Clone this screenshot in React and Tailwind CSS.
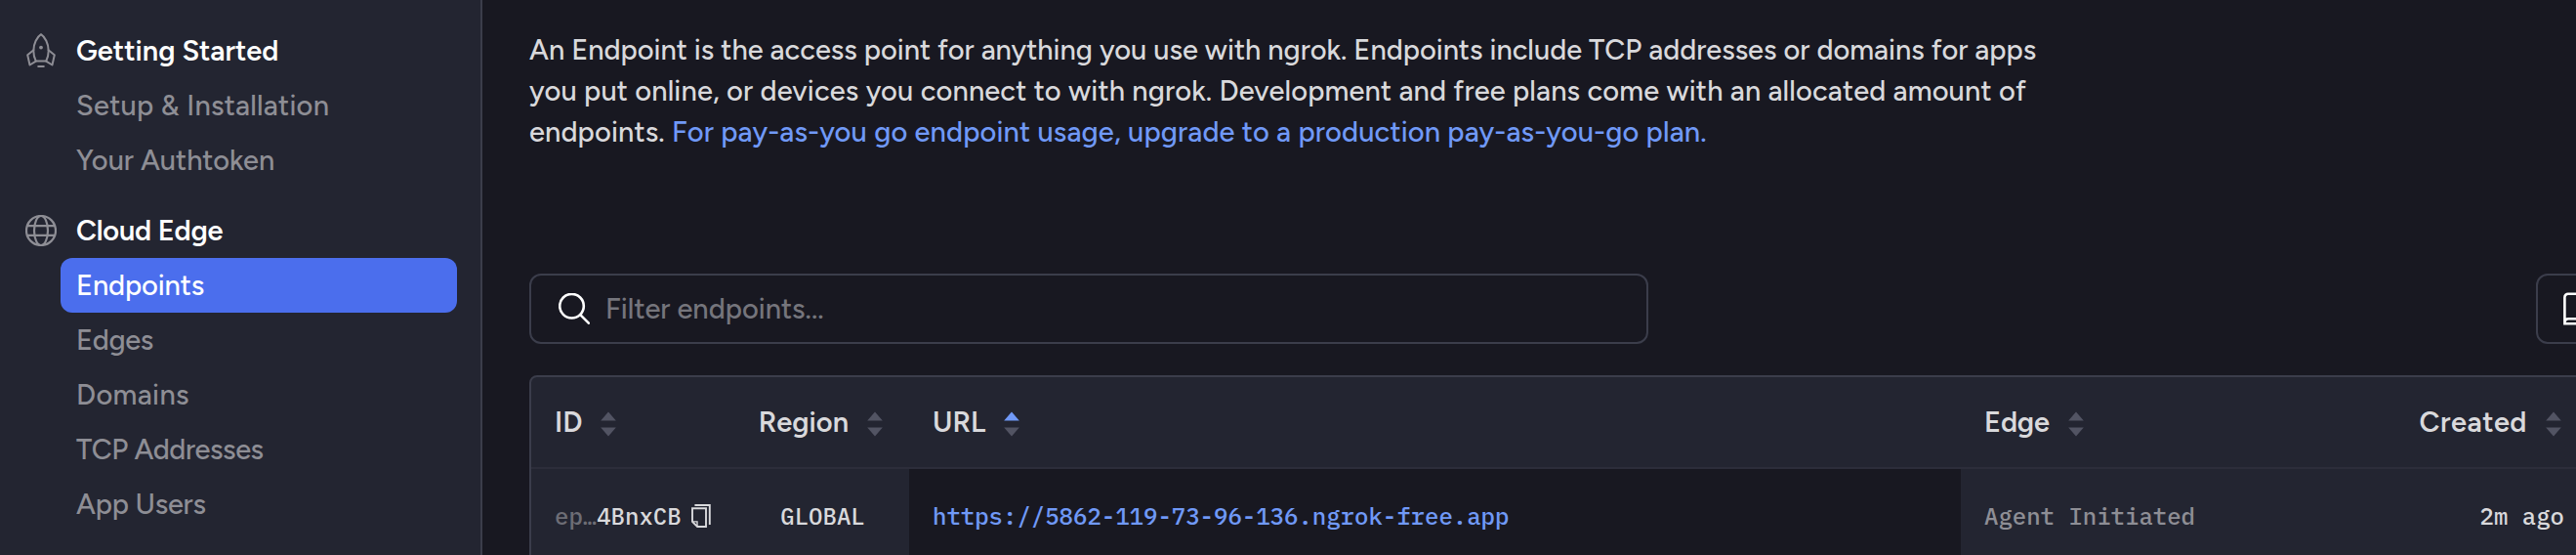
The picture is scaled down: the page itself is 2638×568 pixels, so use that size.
function RocketIcon() {
  return (
    <svg width="32" height="36" viewBox="-1 0 32 36" fill="none" stroke="currentColor" strokeWidth="2" strokeLinejoin="round" strokeLinecap="round">
      <path d="M15 1.200C11 3.800 7.300 10.500 7.300 18c0 4 .9 7.200 2.500 10.600h10.400c1.600-3.400 2.500-6.600 2.500-10.600C22.700 10.500 19 3.800 15 1.200Z" />
      <path d="M7.400 17.200 1.200 22.200l2.300 10.300 6.300-3.900" />
      <path d="M22.600 17.200l6.200 5-2.300 10.300-6.300-3.900" />
      <path d="M12.200 34h5.600" />
      <circle cx="15" cy="14.600" r="1.900" fill="currentColor" stroke="none" />
    </svg>
  );
}

function GlobeIcon() {
  return (
    <svg width="32" height="32" viewBox="0 0 32 32" fill="none" stroke="currentColor" strokeWidth="2.200">
      <circle cx="16" cy="16" r="15" />
      <ellipse cx="16" cy="16" rx="7" ry="15" />
      <path d="M2 11.200h28M2 20.800h28" />
    </svg>
  );
}

function SearchIcon() {
  return (
    <svg className="shrink-0 text-white" width="32" height="32" viewBox="0 0 32 32" fill="none" stroke="currentColor" strokeWidth="2.600" strokeLinecap="round">
      <circle cx="13.500" cy="13.200" r="12.300" />
      <path d="M22.500 22.300l8.300 8.400" />
    </svg>
  );
}

function BookIcon() {
  return (
    <svg className="shrink-0 text-white" width="28" height="34" viewBox="0 0 28 34" fill="none" stroke="currentColor" strokeWidth="2.600">
      <path d="M27 32.200H1.400V5.200a3.500 3.500 0 0 1 3.500-3.500H26.600V27.200H5.200a3.600 3.600 0 0 0-3.600 3.200" />
    </svg>
  );
}

function CopyIcon() {
  return (
    <svg width="20" height="24" viewBox="0 0 20 24" fill="none" stroke="currentColor" strokeWidth="1.900">
      <path d="M3.400 1H18.800V21" />
      <path d="M1 4.200H15V23H6.200L1 17.800Z" />
      <path d="M1 17.900H6V23" strokeWidth="1.400" />
    </svg>
  );
}

function SortArrows({ active }) {
  return (
    <svg className="mt-1 shrink-0" width="16" height="26" viewBox="0 0 16 26">
      <path d="M8 .5 15.800 9.500H.2Z" fill={active ? "#7099f7" : "#525463"} />
      <path d="M8 25.500 15.800 16.500H.2Z" fill="#525463" />
    </svg>
  );
}

function SectionHeading({ icon, children }) {
  return (
    <div className="flex h-14 items-center">
      <span className="mr-5 flex w-8 justify-center text-[#8e8e95]">{icon}</span>
      <span className="font-semibold text-white">{children}</span>
    </div>
  );
}

function NavItem({ active, tracking = "", children }) {
  return (
    <a className={`ml-9 mr-6 flex h-14 items-center rounded-xl pl-4 ${tracking} ${active ? "bg-[#4b6eed] text-white" : "text-[#8e8e95]"}`}>
      {children}
    </a>
  );
}

function HeaderCell({ label, active, className = "" }) {
  return (
    <div className={`flex items-center gap-[19px] pl-6 font-semibold ${className}`}>
      <span>{label}</span>
      <SortArrows active={active} />
    </div>
  );
}

const columns = "grid grid-cols-[210px_177px_1077px_393px_248px]";

export default function App() {
  return (
    <div className="flex h-[568px] w-[2638px] overflow-hidden whitespace-nowrap bg-[#181821] font-['Figtree','Lato',sans-serif] text-[29px] font-medium text-[#d9d9dc] antialiased">
      <aside className="w-[494px] shrink-0 border-r-2 border-[#3b3d4b] bg-[#232531] pl-[26px] pt-6">
        <SectionHeading icon={<RocketIcon />}>Getting Started</SectionHeading>
        <NavItem tracking="tracking-[0.25px]">Setup &amp; Installation</NavItem>
        <NavItem tracking="tracking-[-0.05px]">Your Authtoken</NavItem>
        <div className="mt-4">
          <SectionHeading icon={<GlobeIcon />}>
            <span className="tracking-[-0.25px]">Cloud Edge</span>
          </SectionHeading>
          <NavItem active tracking="tracking-[-0.15px]">Endpoints</NavItem>
          <NavItem tracking="tracking-[-0.35px]">Edges</NavItem>
          <NavItem tracking="tracking-[0.35px]">Domains</NavItem>
          <NavItem tracking="tracking-[-0.45px]">TCP Addresses</NavItem>
          <NavItem tracking="tracking-[-0.25px]">App Users</NavItem>
        </div>
      </aside>

      <main className="w-[2304px] shrink-0 pl-12 pt-[30px]">
        <p className="leading-[42px]">
          <span className="tracking-[-0.03px]">
            An Endpoint is the access point for anything you use with ngrok. Endpoints include TCP addresses or domains for apps
          </span>
          <br />
          <span className="tracking-[0.14px]">
            you put online, or devices you connect to with ngrok. Development and free plans come with an allocated amount of
          </span>
          <br />
          <span className="tracking-[0.13px]">
            endpoints.{" "}
            <a className="text-[#7099f7]">For pay-as-you go endpoint usage, upgrade to a production pay-as-you-go plan.</a>
          </span>
        </p>

        <div className="mt-[124px] flex justify-between">
          <div className="flex h-[72px] w-[1146px] items-center gap-4 rounded-xl border-2 border-[#3b3d4b] pl-7">
            <SearchIcon />
            <span className="text-[#75757c]">Filter endpoints...</span>
          </div>
          <div className="flex h-[72px] w-[201px] items-center rounded-xl border-2 border-[#3b3d4b] pl-[26px]">
            <BookIcon />
          </div>
        </div>

        <div className="mt-8 h-[300px] overflow-hidden rounded-lg border-2 border-[#3b3d4b] bg-[#232531]">
          <div className={`${columns} h-[94px] border-b-2 border-[#2c2d3a]`}>
            <HeaderCell label="ID" />
            <HeaderCell label="Region" className="justify-end pr-[27px]" />
            <HeaderCell label="URL" active />
            <HeaderCell label="Edge" className="tracking-[-0.2px]" />
            <HeaderCell label="Created" className="justify-end pr-[26px] tracking-[0.5px]" />
          </div>
          <div className={`${columns} h-24 font-['IBM_Plex_Mono','Liberation_Mono',monospace] text-[24px] font-medium`}>
            <div className="flex items-center pl-6">
              <span className="text-[#6d6d75]">ep…</span>
              <span>4BnxCB</span>
              <span className="ml-2.5"><CopyIcon /></span>
            </div>
            <div className="flex items-center justify-center">GLOBAL</div>
            <div className="flex items-center bg-[#181821] pl-6 text-[#7099f7]">https://5862-119-73-96-136.ngrok-free.app</div>
            <div className="flex items-center pl-6 text-[#8e8e95]">Agent Initiated</div>
            <div className="flex items-center justify-end pr-[23px]">2m ago</div>
          </div>
        </div>
      </main>
    </div>
  );
}
